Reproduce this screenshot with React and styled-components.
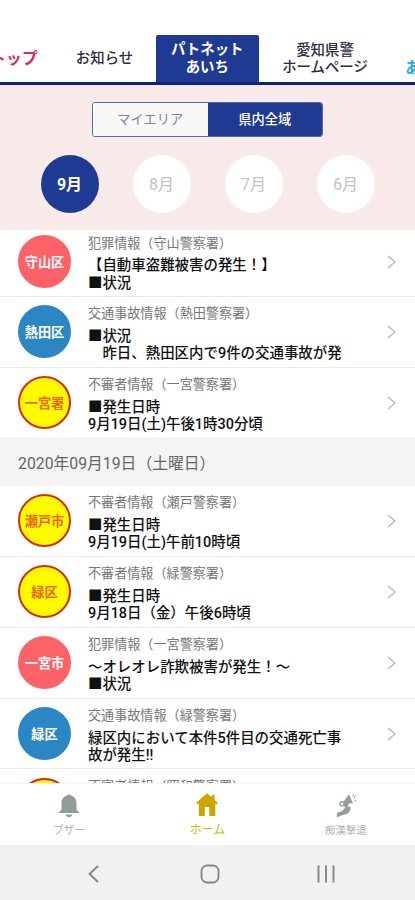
import React from 'react';

import styled, { createGlobalStyle } from 'styled-components';

const GlobalStyle = createGlobalStyle`
  * {
    box-sizing: border-box;
  }

  body {
    margin: 0;
    background: #fff;
    font-family: Roboto, 'Noto Sans CJK JP', sans-serif;
  }
`;

const Screen = styled.div`
  width: 415px;
  height: 900px;
  display: flex;
  flex-direction: column;
  overflow: hidden;
  background: #fff;
`;

const TabStrip = styled.nav`
  height: 84.5px;
  flex-shrink: 0;
  display: flex;
  align-items: flex-end;
  overflow: hidden;
  border-bottom: 3.5px solid #10207f;
`;

const Tab = styled.div`
  width: ${props => props.$width}px;
  height: 47px;
  margin-left: ${props => props.$offset || 0}px;
  flex-shrink: 0;
  display: flex;
  align-items: center;
  justify-content: center;
  padding-top: ${props => props.$drop || 0}px;
  border-radius: 2px 2px 0 0;
  background: ${props => (props.$active ? '#1f3a93' : 'transparent')};
  color: ${props => props.$color || '#32283f'};
  font-size: ${props => props.$size || 14.4}px;
  font-weight: ${props => props.$weight || 500};
  line-height: 17.5px;
  text-align: center;
  white-space: pre;
`;

const FilterPanel = styled.section`
  height: 145px;
  flex-shrink: 0;
  display: flex;
  flex-direction: column;
  align-items: center;
  padding-top: 17px;
  background: #f9eaea;
`;

const Segmented = styled.div`
  width: 231px;
  height: 35px;
  display: flex;
  border: 1px solid #5b6ba8;
  border-radius: 3px;
  overflow: hidden;
`;

const Segment = styled.div`
  flex: 1;
  display: flex;
  align-items: center;
  justify-content: center;
  padding-bottom: 1px;
  background: ${props => (props.$active ? '#1f3a93' : '#f8f8f9')};
  color: ${props => (props.$active ? '#fff' : '#7c83a6')};
  font-size: 13.2px;
  font-weight: ${props => (props.$active ? 500 : 400)};
`;

const Months = styled.div`
  width: 334px;
  display: flex;
  justify-content: space-between;
  margin-top: 18px;
`;

const Month = styled.div`
  width: 58px;
  height: 58px;
  display: flex;
  align-items: center;
  justify-content: center;
  padding-bottom: 1px;
  border-radius: 50%;
  background: ${props => (props.$active ? '#1f3a93' : '#fff')};
  color: ${props => (props.$active ? '#fff' : '#c3c3c3')};
  font-size: 16px;
  font-weight: ${props => (props.$active ? 700 : 400)};
`;

const Feed = styled.main`
  height: 553.5px;
  flex-shrink: 0;
  overflow: hidden;
`;

// The feed is scrolled a few pixels under the filter panel
const FeedInner = styled.div`
  margin-top: -3.5px;
`;

const Row = styled.article`
  height: 70.9px;
  display: flex;
  align-items: flex-start;
  padding: 8.5px 19px 0 18px;
  border-bottom: 1px solid #ececec;
`;

const badgeColors = {
  crime: { bg: '#fd6268', fg: '#fff', ring: '#fd6268' },
  traffic: { bg: '#2b86c3', fg: '#fff', ring: '#2b86c3' },
  suspicious: { bg: '#fffa00', fg: '#e56a17', ring: '#d92a12' },
};

const Badge = styled.div`
  width: 53px;
  height: 53px;
  flex-shrink: 0;
  display: flex;
  align-items: center;
  justify-content: center;
  border: 2px solid ${props => badgeColors[props.$kind].ring};
  border-radius: 50%;
  background: ${props => badgeColors[props.$kind].bg};
  color: ${props => badgeColors[props.$kind].fg};
  font-size: 13.2px;
  font-weight: 700;
  white-space: nowrap;
`;

const RowBody = styled.div`
  flex: 1;
  margin-left: 17px;
`;

const Meta = styled.div`
  height: 22.6px;
  color: #777;
  font-size: 13.1px;
  line-height: 17px;
  white-space: nowrap;
`;

const Message = styled.div`
  color: #111;
  font-size: 14.45px;
  font-weight: 500;
  line-height: 17.5px;
  white-space: pre;
`;

const Chevron = styled.svg`
  width: 9px;
  height: 14px;
  flex-shrink: 0;
  margin-top: 20px;
`;

const DateHeader = styled.h2`
  height: 47.2px;
  display: flex;
  align-items: center;
  margin: 0;
  padding: 1px 18px 0;
  background: #f4f4f4;
  color: #666;
  font-size: 15.8px;
  font-weight: 400;
  white-space: nowrap;
`;

const BottomBar = styled.footer`
  height: 62px;
  flex-shrink: 0;
  display: grid;
  grid-template-columns: repeat(3, 1fr);
  border-top: 1px solid #f3f3f3;
  background: #fff;
`;

const BottomItem = styled.div`
  display: flex;
  flex-direction: column;
  align-items: center;
  padding-top: 9px;
  color: ${props => (props.$active ? '#cba600' : '#929c9c')};

  svg {
    width: 26px;
    height: 26px;
  }
`;

const BottomLabel = styled.span`
  margin-top: 3px;
  color: ${props => (props.$active ? '#c5bd25' : '#b0b2b2')};
  font-size: ${props => props.$size}px;
  line-height: 17px;
`;

const SystemBar = styled.div`
  flex: 1;
  display: flex;
  align-items: center;
  justify-content: space-between;
  padding: 3px 78px 0 83px;
  background: #f1f1f1;

  svg {
    width: 22px;
    height: 22px;
  }
`;

const today = [
  { kind: 'crime', area: '守山区', meta: '犯罪情報（守山警察署）', text: '【自動車盗難被害の発生！】\n■状況' },
  { kind: 'traffic', area: '熱田区', meta: '交通事故情報（熱田警察署）', text: '■状況\n　昨日、熱田区内で9件の交通事故が発' },
  { kind: 'suspicious', area: '一宮署', meta: '不審者情報（一宮警察署）', text: '■発生日時\n9月19日(土)午後1時30分頃' },
];

const earlier = [
  { kind: 'suspicious', area: '瀬戸市', meta: '不審者情報（瀬戸警察署）', text: '■発生日時\n9月19日(土)午前10時頃' },
  { kind: 'suspicious', area: '緑区', meta: '不審者情報（緑警察署）', text: '■発生日時\n9月18日（金）午後6時頃' },
  { kind: 'crime', area: '一宮市', meta: '犯罪情報（一宮警察署）', text: '～オレオレ詐欺被害が発生！～\n■状況' },
  { kind: 'traffic', area: '緑区', meta: '交通事故情報（緑警察署）', text: '緑区内において本件5件目の交通死亡事\n故が発生!!' },
  { kind: 'suspicious', area: '', meta: '不審者情報（昭和警察署）', text: '' },
];

const FeedRow = ({ item }) => (
  <Row>
    <Badge $kind={item.kind}>{item.area}</Badge>
    <RowBody>
      <Meta>{item.meta}</Meta>
      <Message>{item.text}</Message>
    </RowBody>
    <Chevron viewBox="0 0 9 14" fill="none" stroke="#b9b9b9" strokeWidth="1.4">
      <polyline points="1 1 8 7 1 13" />
    </Chevron>
  </Row>
);

const BellIcon = () => (
  <svg viewBox="0 0 26 26" fill="currentColor">
    <path d="M12 2.200c0-1.200 2-1.200 2 0 4.300.7 6.500 3.800 6.500 7.500v7l2.500 2.300v1H3v-1l2.500-2.300v-7c0-3.700 2.200-6.800 6.500-7.500z" />
    <path d="M9.500 21.500h7c-.6 1.700-1.900 2.600-3.500 2.600s-2.900-.9-3.500-2.600z" />
  </svg>
);

const HomeIcon = () => (
  <svg viewBox="0 0 26 26" fill="currentColor">
    <path d="M13 .3 2.300 9.800l1.300 1.600 1.200-.9V23h6v-9h4.500v9h6V10.500l1.200.9 1.300-1.600-3.200-2.800V1.800h-2.800v2.500z" />
  </svg>
);

const AlarmIcon = () => (
  <svg viewBox="0 0 26 26" fill="currentColor">
    <path d="M16 1.300l4 9.200-10-1.100z" />
    <circle cx="9" cy="10.800" r="2.100" fill="none" stroke="currentColor" strokeWidth="1.400" />
    <path d="M11 9l5.500 1.200-2.200 3.300 2.900.2c1.100 3-.7 6.200-3.900 7.300-2 .8-3.400.6-5 1.400L3.500 24.500l.8-4.700 4.500-1.600 3.600-3.700-1.900-1.700z" />
    <path d="M19.300 3.500l1.300-2.500M20.800 5.600l1.700-3.300M21.300 8.200l2.200-.8" fill="none" stroke="currentColor" strokeWidth=".9" />
  </svg>
);

const App = () => (
  <>
    <GlobalStyle />
    <Screen>
      <TabStrip>
        <Tab $width={64} $offset={-18} $color="#d72e55" $size={15.8} $weight={700} $drop={1}>トップ</Tab>
        <Tab $width={102} $offset={7.5} $drop={2}>お知らせ</Tab>
        <Tab $width={103.5} $active $color="#fff" $weight={700} $drop={1}>{'パトネット\nあいち'}</Tab>
        <Tab $width={132} $drop={2}>{'愛知県警\nホームページ'}</Tab>
        <Tab $width={48} $offset={14} $color="#29a7e8" $size={15.8} $weight={700} $drop={19}>あいち</Tab>
      </TabStrip>

      <FilterPanel>
        <Segmented>
          <Segment>マイエリア</Segment>
          <Segment $active>県内全域</Segment>
        </Segmented>
        <Months>
          <Month $active>9月</Month>
          <Month>8月</Month>
          <Month>7月</Month>
          <Month>6月</Month>
        </Months>
      </FilterPanel>

      <Feed>
        <FeedInner>
          {today.map((item, index) => (
            <FeedRow key={index} item={item} />
          ))}
          <DateHeader>2020年09月19日（土曜日）</DateHeader>
          {earlier.map((item, index) => (
            <FeedRow key={index} item={item} />
          ))}
        </FeedInner>
      </Feed>

      <BottomBar>
        <BottomItem>
          <BellIcon />
          <BottomLabel $size={10.8}>ブザー</BottomLabel>
        </BottomItem>
        <BottomItem $active>
          <HomeIcon />
          <BottomLabel $active $size={12}>ホーム</BottomLabel>
        </BottomItem>
        <BottomItem>
          <AlarmIcon />
          <BottomLabel $size={10.5}>痴漢撃退</BottomLabel>
        </BottomItem>
      </BottomBar>

      <SystemBar>
        <svg viewBox="0 0 22 22" fill="none" stroke="#858585" strokeWidth="1.8">
          <polyline points="15 3 6.500 11 15 19" />
        </svg>
        <svg viewBox="0 0 22 22" fill="none" stroke="#858585" strokeWidth="1.8">
          <rect x="2.500" y="2.500" width="17" height="17" rx="5.500" />
        </svg>
        <svg viewBox="0 0 22 22" fill="none" stroke="#8a8a8a" strokeWidth="2">
          <path d="M3.500 2.500v17M11 2.500v17M18.500 2.500v17" />
        </svg>
      </SystemBar>
    </Screen>
  </>
);

export default App;
